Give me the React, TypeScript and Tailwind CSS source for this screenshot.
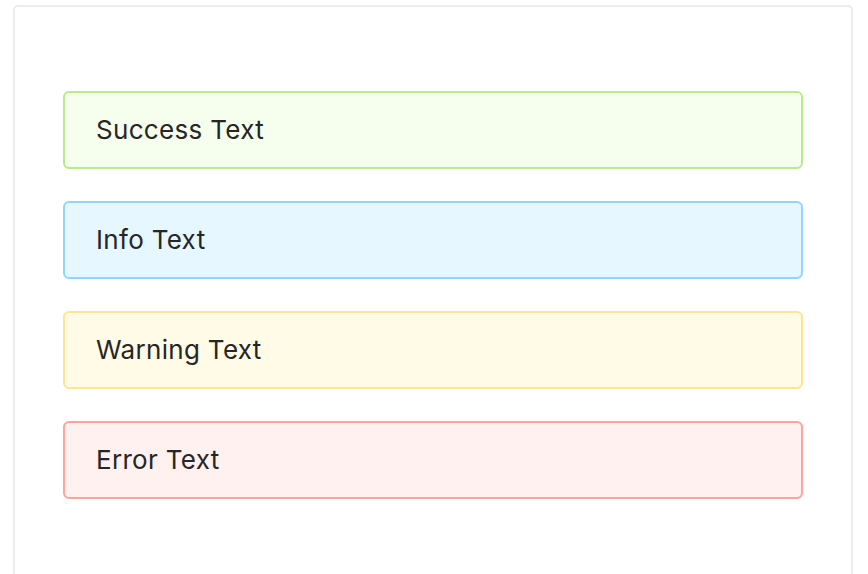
const alerts = [
  { text: 'Success Text', cls: 'bg-[#f6ffed] border-[#b7eb8f]' },
  { text: 'Info Text', cls: 'bg-[#e6f7ff] border-[#91d5ff]' },
  { text: 'Warning Text', cls: 'bg-[#fffbe6] border-[#ffe58f]' },
  { text: 'Error Text', cls: 'bg-[#fff1f0] border-[#ffa39e]' },
];

export default function App() {
  return (
    <div className="h-[574px] overflow-hidden bg-white pl-[13px] pt-[5px] font-['Inter',sans-serif]">
      <section className="flex h-[640px] w-[840px] flex-col gap-[32px] rounded-[5px] border-2 border-[#ebebf0] px-[48px] pt-[84px]">
        {alerts.map((a) => (
          <div
            key={a.text}
            className={`flex h-[78px] items-center rounded-[6px] border-2 pl-[31px] text-[26px] leading-none tracking-[0.012em] text-[#262626] ${a.cls}`}
          >
            {a.text}
          </div>
        ))}
      </section>
    </div>
  );
}
